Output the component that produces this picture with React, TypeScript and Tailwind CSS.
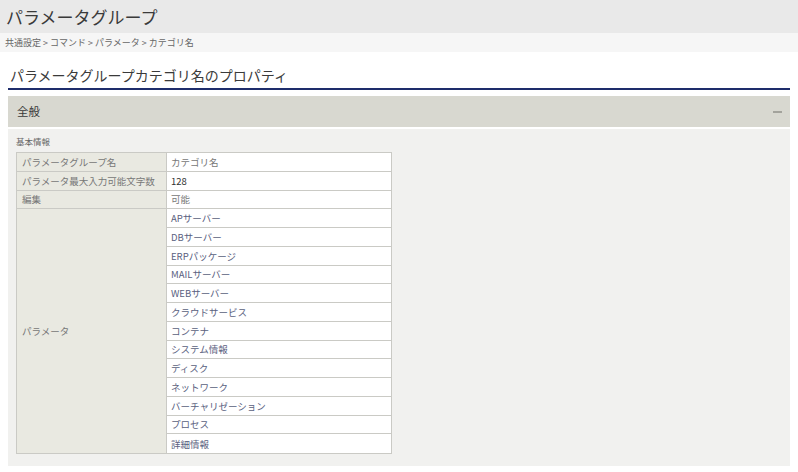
import React from "react";

const params = [
  "APサーバー",
  "DBサーバー",
  "ERPパッケージ",
  "MAILサーバー",
  "WEBサーバー",
  "クラウドサービス",
  "コンテナ",
  "システム情報",
  "ディスク",
  "ネットワーク",
  "バーチャリゼーション",
  "プロセス",
  "詳細情報",
];

const font = { fontFamily: '"Noto Sans CJK JP", "Noto Sans", sans-serif' };

function Row({ label, value, valueClass }: { label: string; value: string; valueClass: string }) {
  return (
    <div className="flex h-[18.75px] border-b border-[#cacac5]">
      <div className="w-[150px] shrink-0 bg-[#e9e9e1] border-r border-[#cacac5] pl-[5px] flex items-center text-[#777]">
        {label}
      </div>
      <div className={`flex-1 bg-white pl-[4px] flex items-center ${valueClass}`}>{value}</div>
    </div>
  );
}

export default function App() {
  return (
    <div className="w-[798px] h-[472px] bg-white overflow-hidden" style={font}>
      <div className="h-[33px] bg-[#e9e9e9] flex items-center pl-[6px] text-[17px] text-[#3a3a3a]">
        パラメータグループ
      </div>
      <div className="h-[19px] bg-[#f6f6f6] flex items-center pl-[5px] text-[9px] text-[#666] whitespace-pre">
        {"共通設定 > コマンド > パラメータ > カテゴリ名"}
      </div>
      <div className="mx-[8px] w-[782px]">
        <div className="h-[38px] flex items-end pb-[3px] pl-[2px] text-[14px] leading-[20px] text-[#3a3a3a] border-b-2 border-[#1e2d6b]">
          パラメータグループカテゴリ名のプロパティ
        </div>
        <div className="mt-[6px] h-[31px] bg-[#d8d8d0] flex items-center justify-between pl-[9px] pr-[8px] text-[11.5px] text-[#3a3a3a]">
          <span>全般</span>
          <span className="w-[9px] h-[2px] bg-[#a3a39c]" />
        </div>
        <div className="mt-[2px] h-[337px] bg-[#f1f1ef] pl-[8px] pt-[6px]">
          <div className="text-[8.5px] leading-[12px] text-[#666]">基本情報</div>
          <div className="mt-[5px] w-[376px] border-t border-l border-r border-[#cacac5] text-[9.5px]">
            <Row label="パラメータグループ名" value="カテゴリ名" valueClass="text-[#777]" />
            <Row label="パラメータ最大入力可能文字数" value="128" valueClass="text-[#333]" />
            <Row label="編集" value="可能" valueClass="text-[#777]" />
            <div className="flex border-b border-[#cacac5]">
              <div className="w-[150px] shrink-0 bg-[#e9e9e1] border-r border-[#cacac5] pl-[5px] flex items-center text-[#777]">
                パラメータ
              </div>
              <div className="flex-1 bg-white">
                {params.map((p, i) => (
                  <div
                    key={p}
                    className={`h-[18.75px] pl-[4px] flex items-center text-[#5a6180] ${i < params.length - 1 ? "border-b border-[#cacac5]" : ""}`}
                  >
                    {p}
                  </div>
                ))}
              </div>
            </div>
          </div>
        </div>
      </div>
    </div>
  );
}
